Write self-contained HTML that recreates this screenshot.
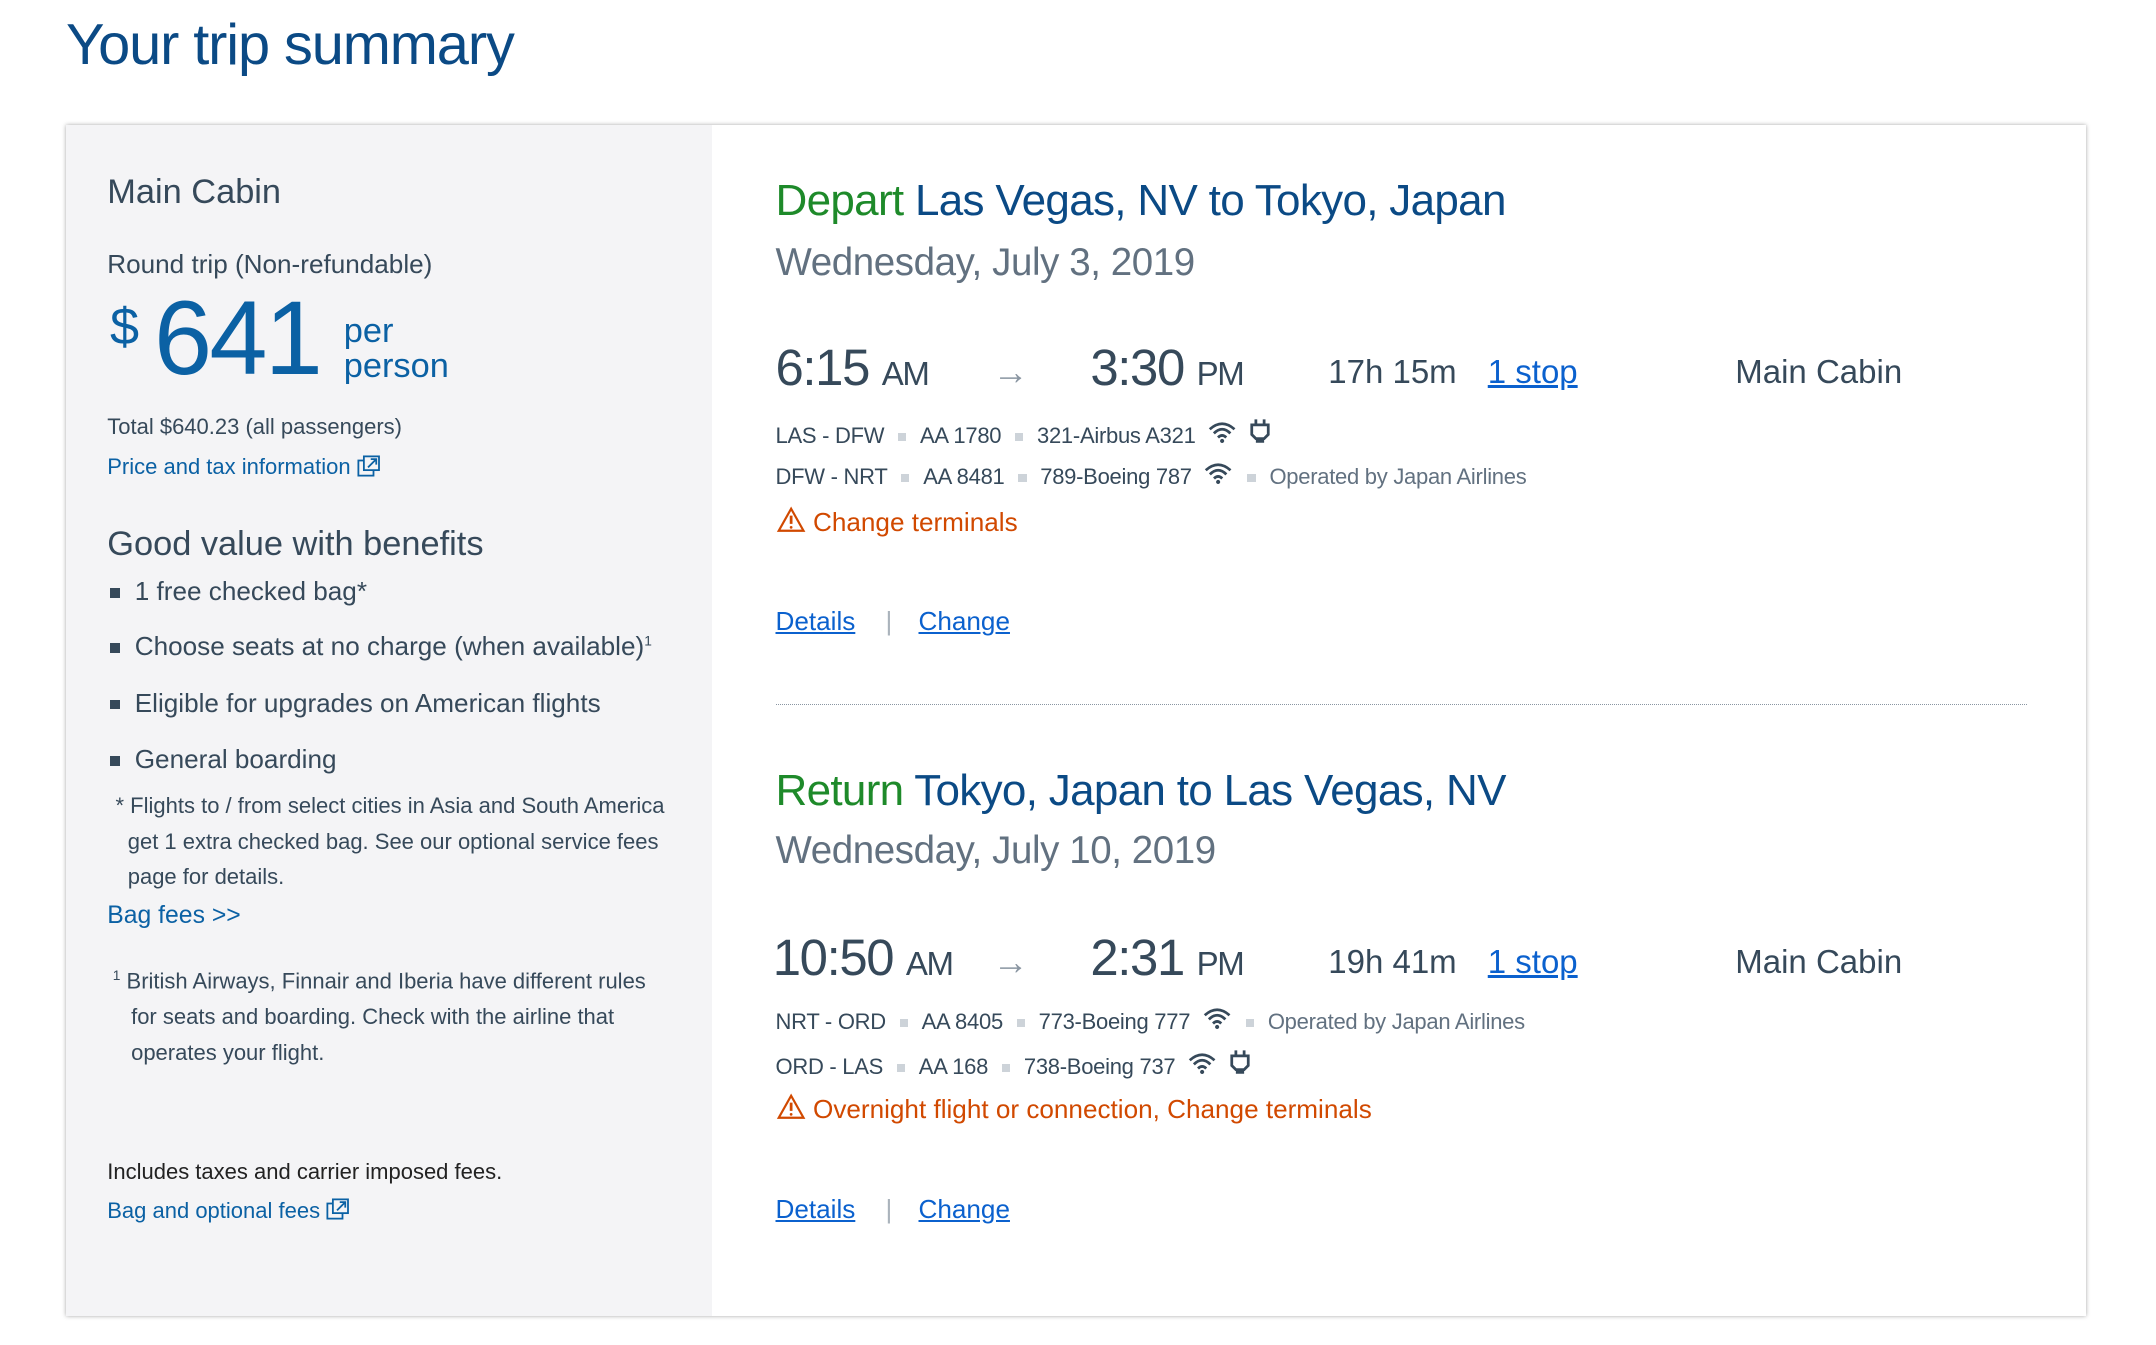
<!DOCTYPE html>
<html><head><meta charset="utf-8"><style>
html,body{margin:0;padding:0;background:#fff;}
body{width:1568px;height:978px;zoom:1.375;font-family:"Liberation Sans","DejaVu Sans",sans-serif;color:#36495a;position:relative;overflow:hidden;}
.a{position:absolute;white-space:nowrap;}
h1{position:absolute;left:48px;top:9px;margin:0;font-weight:normal;font-size:42px;color:#0b4a85;letter-spacing:-0.8px;}
.card{position:absolute;left:48px;top:91px;width:1469px;height:866px;background:#fff;box-shadow:0 0 3px rgba(0,0,0,.35);}
.left{position:absolute;left:0;top:0;width:470px;height:866px;background:#f4f4f6;}
.blue{color:#0b61a4;}
.lnk{color:#0b61ce;text-decoration:underline;}
.sq{display:inline-block;width:6px;height:6px;background:#cdd3d9;margin:0 10px;vertical-align:middle;}
.bul{display:inline-block;width:7px;height:7px;background:#36495a;margin-right:11px;vertical-align:middle;}
.seg{font-size:16px;color:#36495a;letter-spacing:-0.2px;}
.warn{font-size:19px;color:#d14900;}
.big{font-size:37px;color:#36495a;letter-spacing:-1px;}
.ap{font-size:24px;}
.hd{font-size:32px;color:#0b4a85;letter-spacing:-0.5px;}
</style></head><body>
<h1>Your trip summary</h1>
<div class="card">
<div class="left"></div>
</div>
<!-- left -->
<div class="a" style="left:78px;top:126px;font-size:25px;">Main Cabin</div>
<div class="a" style="left:78px;top:181px;font-size:19px;">Round trip (Non-refundable)</div>
<div class="a blue" style="left:80px;top:216px;font-size:38px;">$</div>
<div class="a blue" style="left:112px;top:203px;font-size:76px;letter-spacing:-2px;">641</div>
<div class="a blue" style="left:250px;top:228px;font-size:25px;line-height:26px;">per<br>person</div>
<div class="a" style="left:78px;top:301px;font-size:16px;">Total $640.23 (all passengers)</div>
<div class="a blue" style="left:78px;top:330px;font-size:16px;">Price and tax information <svg width="18" height="16" viewBox="0 0 18 16" style="vertical-align:-2px"><rect x="1" y="4" width="11" height="11" fill="none" stroke="#0b61a4" stroke-width="1.3"/><rect x="5" y="1" width="11" height="10" fill="#f4f4f6" stroke="#0b61a4" stroke-width="1.3"/><path d="M8 9 L14 3 M10 3 H14 V7" stroke="#0b61a4" stroke-width="1.3" fill="none"/></svg></div>
<div class="a" style="left:78px;top:382px;font-size:25px;">Good value with benefits</div>
<div class="a" style="left:80px;top:419px;font-size:19px;"><span class="bul"></span>1 free checked bag*</div>
<div class="a" style="left:80px;top:459px;font-size:19px;"><span class="bul"></span>Choose seats at no charge (when available)<sup style="font-size:10px">1</sup></div>
<div class="a" style="left:80px;top:500px;font-size:19px;"><span class="bul"></span>Eligible for upgrades on American flights</div>
<div class="a" style="left:80px;top:541px;font-size:19px;"><span class="bul"></span>General boarding</div>
<div class="a" style="left:84px;top:573px;font-size:16px;line-height:26px;white-space:normal;width:430px;">* Flights to / from select cities in Asia and South America<br>&nbsp;&nbsp;get 1 extra checked bag. See our optional service fees<br>&nbsp;&nbsp;page for details.</div>
<div class="a blue" style="left:78px;top:656px;font-size:18px;">Bag fees &gt;&gt;</div>
<div class="a" style="left:82px;top:697px;font-size:16px;line-height:26px;"><sup style="font-size:10px">1</sup> British Airways, Finnair and Iberia have different rules<br>&nbsp;&nbsp;&nbsp;for seats and boarding. Check with the airline that<br>&nbsp;&nbsp;&nbsp;operates your flight.</div>
<div class="a" style="left:78px;top:843px;font-size:16px;color:#222;">Includes taxes and carrier imposed fees.</div>
<div class="a blue" style="left:78px;top:871px;font-size:16px;">Bag and optional fees <svg width="18" height="16" viewBox="0 0 18 16" style="vertical-align:-2px"><rect x="1" y="4" width="11" height="11" fill="none" stroke="#0b61a4" stroke-width="1.3"/><rect x="5" y="1" width="11" height="10" fill="#f4f4f6" stroke="#0b61a4" stroke-width="1.3"/><path d="M8 9 L14 3 M10 3 H14 V7" stroke="#0b61a4" stroke-width="1.3" fill="none"/></svg></div>

<!-- depart -->
<div class="a hd" style="left:564px;top:128px;"><span style="color:#1e8a2a">Depart</span> Las Vegas, NV to Tokyo, Japan</div>
<div class="a" style="left:564px;top:175px;font-size:28px;color:#627180;letter-spacing:-0.3px;">Wednesday, July 3, 2019</div>
<div class="a big" style="left:564px;top:246px;">6:15 <span class="ap">AM</span></div>
<div class="a" style="left:722px;top:256px;font-size:26px;color:#8a96a2;">→</div>
<div class="a big" style="left:793px;top:246px;">3:30 <span class="ap">PM</span></div>
<div class="a" style="left:966px;top:257px;font-size:24px;">17h 15m</div>
<div class="a lnk" style="left:1082px;top:257px;font-size:24px;">1 stop</div>
<div class="a" style="left:1262px;top:257px;font-size:24px;">Main Cabin</div>
<div class="a seg" style="left:564px;top:304px;">LAS - DFW<span class="sq"></span>AA 1780<span class="sq"></span>321-Airbus A321 &nbsp;<svg width="22" height="16" viewBox="0 0 22 16"><path d="M2 6 Q11 -2 20 6 M5 9 Q11 3 17 9 M8 12 Q11 9 14 12" stroke="#36495a" stroke-width="2" fill="none"/><circle cx="11" cy="14.5" r="1.5" fill="#36495a"/></svg> &nbsp;<svg width="16" height="18" viewBox="0 0 16 18"><path d="M5 1 V5 M11 1 V5 M2 5 H14 V12 L11 15 H5 L2 12 Z M6 15 V17 H10 V15" stroke="#36495a" stroke-width="2" fill="none"/></svg></div>
<div class="a seg" style="left:564px;top:336px;">DFW - NRT<span class="sq"></span>AA 8481<span class="sq"></span>789-Boeing 787 &nbsp;<svg width="22" height="16" viewBox="0 0 22 16"><path d="M2 6 Q11 -2 20 6 M5 9 Q11 3 17 9 M8 12 Q11 9 14 12" stroke="#36495a" stroke-width="2" fill="none"/><circle cx="11" cy="14.5" r="1.5" fill="#36495a"/></svg><span class="sq"></span><span style="color:#627180">Operated by Japan Airlines</span></div>
<div class="a warn" style="left:564px;top:368px;"><svg width="22" height="20" viewBox="0 0 22 20" style="vertical-align:-2px"><path d="M11 2 L20 18 H2 Z" stroke="#d14900" stroke-width="1.6" fill="none"/><path d="M11 7 V13" stroke="#d14900" stroke-width="2"/><circle cx="11" cy="15.5" r="1" fill="#d14900"/></svg> Change terminals</div>
<div class="a lnk" style="left:564px;top:441px;font-size:19px;">Details</div>
<div class="a" style="left:644px;top:441px;font-size:19px;color:#aab3bc;">|</div>
<div class="a lnk" style="left:668px;top:441px;font-size:19px;">Change</div>
<div class="a" style="left:564px;top:512px;width:910px;border-top:1px dotted #8a96a2;"></div>

<!-- return -->
<div class="a hd" style="left:564px;top:557px;"><span style="color:#1e8a2a">Return</span> Tokyo, Japan to Las Vegas, NV</div>
<div class="a" style="left:564px;top:603px;font-size:28px;color:#627180;letter-spacing:-0.3px;">Wednesday, July 10, 2019</div>
<div class="a big" style="left:562px;top:675px;">10:50 <span class="ap">AM</span></div>
<div class="a" style="left:722px;top:685px;font-size:26px;color:#8a96a2;">→</div>
<div class="a big" style="left:793px;top:675px;">2:31 <span class="ap">PM</span></div>
<div class="a" style="left:966px;top:686px;font-size:24px;">19h 41m</div>
<div class="a lnk" style="left:1082px;top:686px;font-size:24px;">1 stop</div>
<div class="a" style="left:1262px;top:686px;font-size:24px;">Main Cabin</div>
<div class="a seg" style="left:564px;top:732px;">NRT - ORD<span class="sq"></span>AA 8405<span class="sq"></span>773-Boeing 777 &nbsp;<svg width="22" height="16" viewBox="0 0 22 16"><path d="M2 6 Q11 -2 20 6 M5 9 Q11 3 17 9 M8 12 Q11 9 14 12" stroke="#36495a" stroke-width="2" fill="none"/><circle cx="11" cy="14.5" r="1.5" fill="#36495a"/></svg><span class="sq"></span><span style="color:#627180">Operated by Japan Airlines</span></div>
<div class="a seg" style="left:564px;top:763px;">ORD - LAS<span class="sq"></span>AA 168<span class="sq"></span>738-Boeing 737 &nbsp;<svg width="22" height="16" viewBox="0 0 22 16"><path d="M2 6 Q11 -2 20 6 M5 9 Q11 3 17 9 M8 12 Q11 9 14 12" stroke="#36495a" stroke-width="2" fill="none"/><circle cx="11" cy="14.5" r="1.5" fill="#36495a"/></svg> &nbsp;<svg width="16" height="18" viewBox="0 0 16 18"><path d="M5 1 V5 M11 1 V5 M2 5 H14 V12 L11 15 H5 L2 12 Z M6 15 V17 H10 V15" stroke="#36495a" stroke-width="2" fill="none"/></svg></div>
<div class="a warn" style="left:564px;top:795px;"><svg width="22" height="20" viewBox="0 0 22 20" style="vertical-align:-2px"><path d="M11 2 L20 18 H2 Z" stroke="#d14900" stroke-width="1.6" fill="none"/><path d="M11 7 V13" stroke="#d14900" stroke-width="2"/><circle cx="11" cy="15.5" r="1" fill="#d14900"/></svg> Overnight flight or connection, Change terminals</div>
<div class="a lnk" style="left:564px;top:868px;font-size:19px;">Details</div>
<div class="a" style="left:644px;top:868px;font-size:19px;color:#aab3bc;">|</div>
<div class="a lnk" style="left:668px;top:868px;font-size:19px;">Change</div>
</body></html>
